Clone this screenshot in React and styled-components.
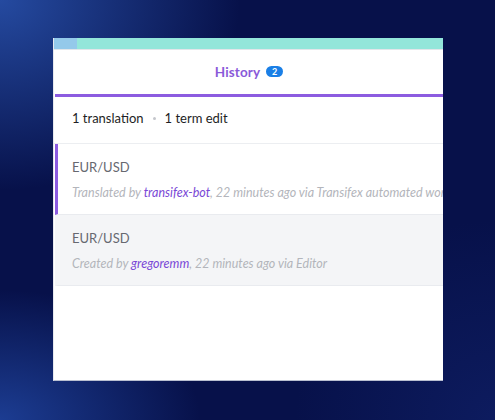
import React from "react";
import styled, { createGlobalStyle } from "styled-components";

const Global = createGlobalStyle`
  html, body { margin: 0; padding: 0; }
  body {
    width: 495px;
    height: 420px;
    overflow: hidden;
    font-family: Lato, "Open Sans", sans-serif;
    background:
      radial-gradient(ellipse 240px 190px at 0% 0%, rgba(42,84,175,0.85), rgba(42,84,175,0) 100%),
      radial-gradient(ellipse 200px 130px at 0% 100%, rgba(35,75,170,0.75), rgba(35,75,170,0) 100%),
      radial-gradient(ellipse 200px 200px at 100% 100%, rgba(20,40,120,0.45), rgba(20,40,120,0) 100%),
      #07114a;
  }
`;

const Page = styled.div`
  padding: 38px 0 0 53px;
`;

const Panel = styled.div`
  width: 390px;
  height: 343px;
  background: #fff;
  overflow: hidden;
  display: flex;
  flex-direction: column;
  border-left: 1px solid #e6e8ee;
  border-bottom: 1px solid #b9bfd0;
  box-sizing: border-box;
`;

const TopBar = styled.div`
  height: 11px;
  flex-shrink: 0;
  background: #93e6da;
  display: flex;
  border-bottom: 1px solid #e2e6ea;
  margin-left: -1px;
`;

const TopSeg = styled.div`
  width: 24px;
  background: #94c9ea;
`;

const Header = styled.div`
  height: 47px;
  flex-shrink: 0;
  display: flex;
  align-items: center;
  justify-content: center;
  gap: 6px;
  border-bottom: 3px solid #8c5ce0;
  margin-left: 1px;
  padding-bottom: 1px;
  box-sizing: border-box;
`;

const Title = styled.span`
  font-size: 13.5px;
  font-weight: 700;
  color: #8a5ad9;
  letter-spacing: 0.1px;
`;

const Badge = styled.span`
  display: inline-flex;
  align-items: center;
  justify-content: center;
  height: 11px;
  min-width: 17px;
  padding: 0 1px;
  border-radius: 6px;
  background: #1a7fe6;
  color: #fff;
  font-size: 9px;
  font-weight: 700;
  box-sizing: border-box;
`;

const Summary = styled.div`
  height: 47px;
  flex-shrink: 0;
  display: flex;
  align-items: center;
  padding-left: 18px;
  padding-bottom: 4px;
  box-sizing: border-box;
  font-size: 13px;
  color: #1e1e24;
  border-bottom: 1px solid #eceef1;
  gap: 9px;
`;

const Dot = styled.span`
  width: 3px;
  height: 3px;
  border-radius: 50%;
  background: #c4c6cc;
`;

const Row = styled.div`
  height: 71px;
  flex-shrink: 0;
  box-sizing: border-box;
  display: flex;
  flex-direction: column;
  justify-content: center;
  gap: 10px;
  background: ${(p) => (p.$muted ? "#f4f5f7" : "#fff")};
  border-bottom: 1px solid #e9ebef;
  border-left: 3px solid ${(p) => (p.$active ? "#8c5ce0" : "transparent")};
  margin-left: 1px;
  padding-left: 14px;
  white-space: nowrap;
`;

const Key = styled.div`
  font-size: 13px;
  color: #666870;
`;

const Meta = styled.div`
  font-size: 12.5px;
  font-style: italic;
  color: #b3b5bb;
`;

const User = styled.span`
  color: #7a48d6;
`;

export default function App() {
  return (
    <>
      <Global />
      <Page>
        <Panel>
          <TopBar>
            <TopSeg />
          </TopBar>
          <Header>
            <Title>History</Title>
            <Badge>2</Badge>
          </Header>
          <Summary>
            <span>1 translation</span>
            <Dot />
            <span>1 term edit</span>
          </Summary>
          <Row $active>
            <Key>EUR/USD</Key>
            <Meta>
              Translated by <User>transifex-bot</User>, 22 minutes ago via Transifex automated workflow
            </Meta>
          </Row>
          <Row $muted>
            <Key>EUR/USD</Key>
            <Meta>
              Created by <User>gregoremm</User>, 22 minutes ago via Editor
            </Meta>
          </Row>
        </Panel>
      </Page>
    </>
  );
}
